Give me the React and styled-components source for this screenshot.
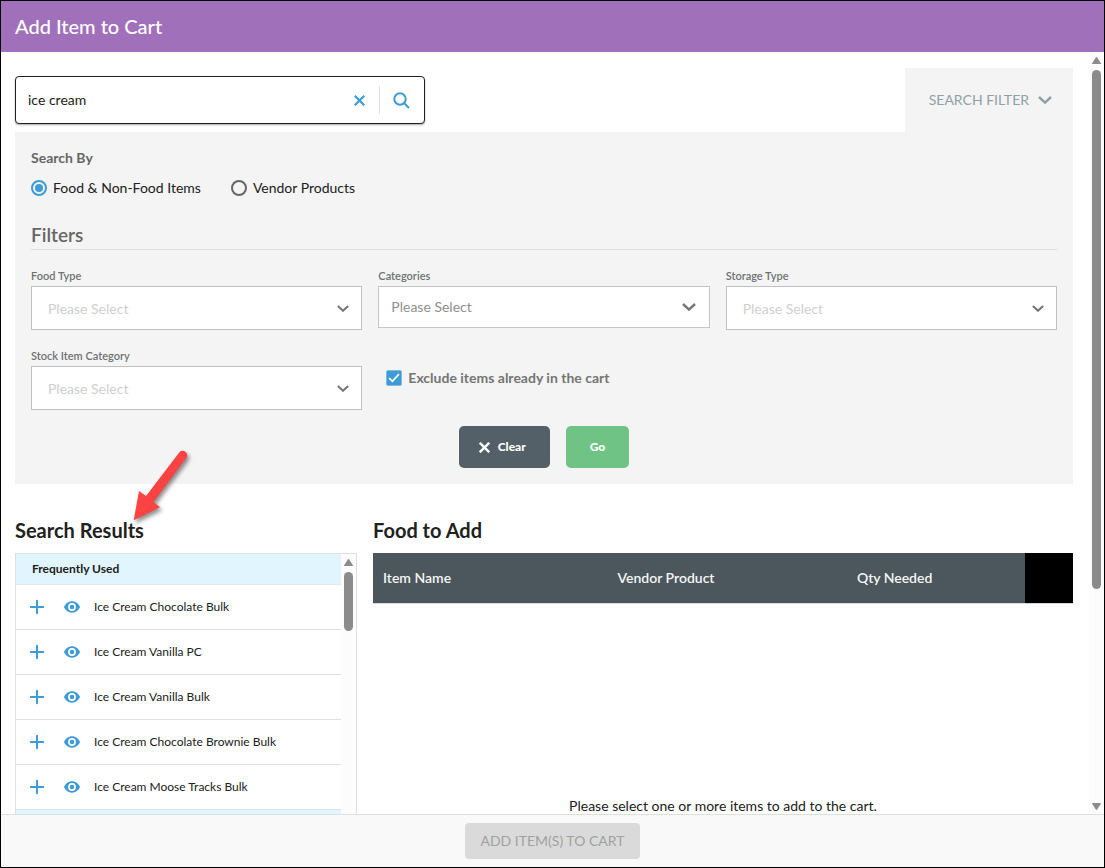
import React, { useState } from "react";
import styled, { createGlobalStyle, css } from "styled-components";

const GlobalStyle = createGlobalStyle`
  *, *::before, *::after { box-sizing: border-box; }
  body {
    margin: 0;
    font-family: Lato, "Liberation Sans", sans-serif;
    font-size: 14px;
    line-height: 20px;
    color: #212121;
    background: #fff;
  }
  button, input, select { font: inherit; color: inherit; }
`;

const blue = "#3d9bd5";
const line = "#dedfdf";

const Dialog = styled.div`
  height: 100vh;
  display: flex;
  flex-direction: column;
  border: 1px solid #000;
  background: #fff;
`;

const DialogHeader = styled.header`
  flex: none;
  padding: 11px 14px 12px;
  background: #a070ba;
  color: #fff;
`;

const Title = styled.h1`
  margin: 0;
  font-size: 20px;
  line-height: 28px;
  font-weight: 500;
`;

const Main = styled.div`
  flex: 1;
  min-height: 0;
  display: flex;
`;

const ScrollArea = styled.main`
  flex: 1;
  min-width: 0;
  overflow-y: auto;
  scrollbar-width: none;
  padding: 16px 16px 16px 14px;
`;

const Rail = styled.div`
  flex: none;
  width: 15px;
  padding: 5px 3px 4px;
  display: flex;
  flex-direction: column;
  gap: 6px;
  background: #fcfcfc;
`;

const Track = styled.div`
  flex: 1;
  display: flex;
  flex-direction: column;
`;

const Thumb = styled.div`
  flex: ${(p) => p.$share};
  border-radius: 5px;
  background: #8b8b8b;
`;

const RailRest = styled.div`
  flex: ${(p) => p.$share};
`;

const TopRow = styled.div`
  display: flex;
  justify-content: space-between;
  align-items: center;
`;

const SearchBox = styled.form`
  width: 410px;
  height: 48px;
  display: flex;
  align-items: center;
  padding-right: 14px;
  border: 1px solid #212121;
  border-radius: 4px;
  box-shadow: 0 1px 2px rgba(0, 0, 0, 0.35);
  background: #fff;
`;

const SearchInput = styled.input`
  flex: 1;
  min-width: 0;
  padding: 0 12px;
  border: 0;
  outline: 0;
  background: transparent;
`;

const IconButton = styled.button`
  display: grid;
  place-items: center;
  padding: 0;
  border: 0;
  background: none;
  color: ${blue};
  cursor: pointer;
`;

const ClearSearch = styled(IconButton)`
  margin-right: 14px;
`;

const SubmitSearch = styled(IconButton)`
  height: 28px;
  padding-left: 13px;
  border-left: 1px solid ${line};
`;

const FilterTab = styled.button`
  height: 64px;
  display: flex;
  align-items: center;
  gap: 9px;
  padding: 0 21px 0 24px;
  border: 0;
  background: #f4f4f4;
  color: #8fa0a8;
`;

const FilterPanel = styled.section`
  padding: 16px;
  background: #f4f4f4;
`;

const RadioGroup = styled.fieldset`
  margin: 0;
  padding: 0;
  border: 0;
  display: flex;
  flex-wrap: wrap;
  gap: 0 30px;
`;

const Legend = styled.legend`
  padding: 0;
  margin-bottom: 10px;
  color: #666;
  font-weight: 700;
`;

const RadioLabel = styled.label`
  display: flex;
  align-items: center;
  gap: 6px;
`;

const Radio = styled.input`
  appearance: none;
  width: 16px;
  height: 16px;
  margin: 0;
  border: 2px solid #666;
  border-radius: 50%;
  display: grid;
  place-items: center;

  &:checked { border-color: ${blue}; }
  &:checked::before {
    content: "";
    width: 8px;
    height: 8px;
    border-radius: 50%;
    background: ${blue};
  }
`;

const FiltersTitle = styled.h2`
  margin: 24px 0 16px;
  padding-bottom: 1px;
  border-bottom: 1px solid ${line};
  color: #666;
  font-size: 19px;
  line-height: 26px;
  font-weight: 600;
`;

const FieldGrid = styled.div`
  display: grid;
  grid-template-columns: repeat(3, minmax(0, 1fr));
  column-gap: 16px;
  row-gap: 16px;
`;

const Field = styled.div`
  display: flex;
  flex-direction: column;
`;

const FieldLabel = styled.label`
  color: #6e7275;
  font-size: 11px;
  line-height: 20px;
  font-weight: 600;
`;

const SelectWrap = styled.div`
  display: grid;
  align-items: center;

  > * { grid-area: 1 / 1; }
  > svg {
    justify-self: end;
    margin-right: ${(p) => (p.$compact ? "14px" : "13px")};
    pointer-events: none;
    color: #757575;
  }
`;

const Select = styled.select`
  appearance: none;
  width: 100%;
  height: 44px;
  padding: 1px 32px 0 16px;
  border: 1px solid #bfc0c0;
  border-radius: 0;
  background: #fff;
  color: #cfcfcf;

  ${(p) =>
    p.$compact &&
    css`
      height: 42px;
      padding: 0 32px 0 12px;
      border-color: #c4c5c5;
      color: #909090;
    `}
`;

const CheckLabel = styled.label`
  align-self: center;
  display: flex;
  align-items: center;
  gap: 6px;
  padding-left: 8px;
  color: #757575;
  font-weight: 700;
`;

const CheckMark = styled.span`
  display: grid;
  place-items: center;
  > * { grid-area: 1 / 1; }
  > svg { pointer-events: none; color: #fff; }
`;

const Checkbox = styled.input`
  appearance: none;
  width: 16px;
  height: 16px;
  margin: 0;
  border: 1px solid #7dbbe2;
  border-radius: 2px;
  background: #fff;
  &:checked { background: ${blue}; }
`;

const Actions = styled.div`
  display: flex;
  justify-content: center;
  gap: 16px;
  margin-top: 16px;
`;

const Button = styled.button`
  height: 42px;
  display: flex;
  align-items: center;
  gap: 8px;
  padding: 0 24px 0 ${(p) => (p.$go ? "24px" : "20px")};
  border: 0;
  border-radius: 5px;
  background: ${(p) => (p.$go ? "#6ec385" : "#546067")};
  color: #fff;
  font-size: 12px;
  font-weight: 900;
`;

const Columns = styled.div`
  display: grid;
  grid-template-columns: 342px minmax(0, 1fr);
  column-gap: 16px;
  margin-top: 32px;
`;

const Column = styled.section`
  position: relative;
  min-width: 0;
`;

const ColumnTitle = styled.h2`
  margin: 0 0 9px;
  font-size: 20px;
  line-height: 28px;
  font-weight: 700;
`;

const Pointer = styled.svg`
  position: absolute;
  top: -70px;
  left: 110px;
  pointer-events: none;
  overflow: visible;

  g { filter: drop-shadow(2px 3px 2px rgba(0, 0, 0, 0.45)); }
`;

const ResultBox = styled.div`
  height: 320px;
  display: flex;
  border: 1px solid ${line};
`;

const ResultList = styled.div`
  flex: 1;
  min-width: 0;
  overflow-y: auto;
  scrollbar-width: none;
`;

const GroupTitle = styled.h3`
  margin: 0;
  min-height: 31px;
  padding: 0 16px;
  border-bottom: 1px solid #e6eaec;
  background: #e0f5ff;
  font-size: 12px;
  line-height: 30px;
  font-weight: 700;
`;

const Rows = styled.ul`
  margin: 0;
  padding: 0;
  list-style: none;
`;

const Row = styled.li`
  height: 45px;
  display: flex;
  align-items: center;
  padding-left: 13px;
  border-bottom: 1px solid ${line};
  font-size: 12px;
`;

const RowButton = styled(IconButton)`
  margin-right: ${(p) => p.$gap};
`;

const Table = styled.table`
  width: 100%;
  border-collapse: separate;
  border-spacing: 0;
  table-layout: fixed;
`;

const HeadCell = styled.th`
  width: ${(p) => p.$width};
  height: 51px;
  padding: 0 10px;
  border-bottom: 1px solid #d5dadd;
  background: ${(p) => (p.$blank ? "#000" : "#4c575d")};
  background-clip: padding-box;
  color: #f5f5f5;
  text-align: left;
  font-weight: 600;
`;

const EmptyCell = styled.td`
  padding: 192px 0 40px;
  text-align: center;
`;

const Footer = styled.footer`
  flex: none;
  display: flex;
  justify-content: center;
  padding: 8px;
  border-top: 1px solid ${line};
  background: #f9f9f9;
`;

const AddButton = styled.button`
  height: 36px;
  padding: 0 15px;
  border: 0;
  border-radius: 4px;
  background: #dadada;
  color: #a1a1a1;
`;

const Chevron = ({ size = 14 }) => (
  <svg width={size} height={size === 14 ? 8 : 7} viewBox="0 0 14 8" fill="none" stroke="currentColor" strokeWidth="2.4" aria-hidden="true">
    <path d="M1 1l6 5.600L13 1" />
  </svg>
);

const Cross = ({ size = 11, weight = 2 }) => (
  <svg width={size} height={size} viewBox="0 0 10 10" fill="none" stroke="currentColor" strokeWidth={weight} aria-hidden="true">
    <path d="M.7.7l8.600 8.600M9.300.7L.7 9.300" />
  </svg>
);

const Magnifier = () => (
  <svg width="17" height="17" viewBox="0 0 17 17" fill="none" stroke="currentColor" strokeWidth="2" aria-hidden="true">
    <circle cx="7" cy="7" r="5.700" />
    <path d="M11 11l5 5" />
  </svg>
);

const Plus = () => (
  <svg width="16" height="16" viewBox="0 0 16 16" fill="none" stroke="currentColor" strokeWidth="2" strokeLinecap="round" aria-hidden="true">
    <path d="M8 1.800v12.400M1.800 8h12.400" />
  </svg>
);

const Eye = () => (
  <svg width="16" height="12" viewBox="0 0 16 12" aria-hidden="true">
    <path
      fill="currentColor"
      fillRule="evenodd"
      d="M8 .3C4.400.3 1.300 2.600 0 6c1.300 3.400 4.400 5.700 8 5.700s6.700-2.300 8-5.700C14.700 2.600 11.600.3 8 .3zM8 9.900a3.900 3.900 0 1 1 0-7.800 3.900 3.900 0 0 1 0 7.800zM8 3.700a2.300 2.300 0 1 0 0 4.600 2.300 2.300 0 0 0 0-4.600z"
    />
  </svg>
);

const Arrow = ({ down }) => (
  <svg width="9" height="7" viewBox="0 0 9 7" fill="#8b8b8b" aria-hidden="true">
    <path d={down ? "M0 .5Q0 0 .5 0h8Q9 0 9 .5L5.200 6.500q-.7.800-1.400 0z" : "M0 6.500Q0 7 .5 7h8Q9 7 9 6.500L5.200.5q-.7-.8-1.400 0z"} />
  </svg>
);

const Scrollbar = ({ thumb, rest }) => (
  <Rail aria-hidden="true">
    <Arrow />
    <Track>
      <Thumb $share={thumb} />
      <RailRest $share={rest} />
    </Track>
    <Arrow down />
  </Rail>
);

const SelectField = ({ id, label, compact }) => (
  <Field>
    <FieldLabel htmlFor={id}>{label}</FieldLabel>
    <SelectWrap $compact={compact}>
      <Select id={id} $compact={compact}>
        <option>Please Select</option>
      </Select>
      <Chevron size={compact ? 14 : 12} />
    </SelectWrap>
  </Field>
);

const items = [
  "Ice Cream Chocolate Bulk",
  "Ice Cream Vanilla PC",
  "Ice Cream Vanilla Bulk",
  "Ice Cream Chocolate Brownie Bulk",
  "Ice Cream Moose Tracks Bulk",
];

export default function App() {
  const [query, setQuery] = useState("ice cream");
  const [searchBy, setSearchBy] = useState("food");
  const [exclude, setExclude] = useState(true);

  return (
    <>
      <GlobalStyle />
      <Dialog role="dialog" aria-labelledby="dialog-title">
        <DialogHeader>
          <Title id="dialog-title">Add Item to Cart</Title>
        </DialogHeader>

        <Main>
          <ScrollArea>
            <TopRow>
              <SearchBox role="search" onSubmit={(e) => e.preventDefault()}>
                <SearchInput aria-label="Search items" value={query} onChange={(e) => setQuery(e.target.value)} />
                <ClearSearch type="button" aria-label="Clear search" onClick={() => setQuery("")}>
                  <Cross />
                </ClearSearch>
                <SubmitSearch type="submit" aria-label="Search">
                  <Magnifier />
                </SubmitSearch>
              </SearchBox>
              <FilterTab type="button">
                SEARCH FILTER
                <Chevron />
              </FilterTab>
            </TopRow>

            <FilterPanel>
              <RadioGroup>
                <Legend>Search By</Legend>
                <RadioLabel>
                  <Radio type="radio" name="by" checked={searchBy === "food"} onChange={() => setSearchBy("food")} />
                  Food &amp; Non-Food Items
                </RadioLabel>
                <RadioLabel>
                  <Radio type="radio" name="by" checked={searchBy === "vendor"} onChange={() => setSearchBy("vendor")} />
                  Vendor Products
                </RadioLabel>
              </RadioGroup>

              <FiltersTitle>Filters</FiltersTitle>
              <FieldGrid>
                <SelectField id="food-type" label="Food Type" />
                <SelectField id="categories" label="Categories" compact />
                <SelectField id="storage-type" label="Storage Type" />
                <SelectField id="stock-category" label="Stock Item Category" />
                <CheckLabel>
                  <CheckMark>
                    <Checkbox type="checkbox" checked={exclude} onChange={() => setExclude(!exclude)} />
                    <svg width="12" height="10" viewBox="0 0 11 9" fill="none" stroke="currentColor" strokeWidth="1.600" aria-hidden="true">
                      <path d="M1 4.500l3 3L10 1" />
                    </svg>
                  </CheckMark>
                  Exclude items already in the cart
                </CheckLabel>
              </FieldGrid>

              <Actions>
                <Button type="button">
                  <Cross weight={2.2} />
                  Clear
                </Button>
                <Button type="button" $go>
                  Go
                </Button>
              </Actions>
            </FilterPanel>

            <Columns>
              <Column>
                <ColumnTitle>Search Results</ColumnTitle>
                <Pointer width="72" height="84" viewBox="125 446 72 84" aria-hidden="true">
                  <g fill="#fb4343">
                    <path d="M133.700 520.300L139 491l7 5 33.200-43.500a4.400 4.400 0 0 1 7 5.500L153.500 502l6.500 5.300z" />
                  </g>
                </Pointer>
                <ResultBox>
                  <ResultList>
                    <GroupTitle>Frequently Used</GroupTitle>
                    <Rows>
                      {items.map((name) => (
                        <Row key={name}>
                          <RowButton type="button" aria-label={`Add ${name}`} $gap="19px">
                            <Plus />
                          </RowButton>
                          <RowButton type="button" aria-label={`View ${name}`} $gap="14px">
                            <Eye />
                          </RowButton>
                          {name}
                        </Row>
                      ))}
                    </Rows>
                    <GroupTitle as="div" />
                  </ResultList>
                  <Scrollbar thumb={58} rest={222} />
                </ResultBox>
              </Column>

              <Column>
                <ColumnTitle>Food to Add</ColumnTitle>
                <Table>
                  <thead>
                    <tr>
                      <HeadCell $width="33.5%">Item Name</HeadCell>
                      <HeadCell $width="34.2%">Vendor Product</HeadCell>
                      <HeadCell>Qty Needed</HeadCell>
                      <HeadCell $width="48px" $blank aria-label="Actions" />
                    </tr>
                  </thead>
                  <tbody>
                    <tr>
                      <EmptyCell colSpan={4}>Please select one or more items to add to the cart.</EmptyCell>
                    </tr>
                  </tbody>
                </Table>
              </Column>
            </Columns>
          </ScrollArea>
          <Scrollbar thumb={5} rest={2} />
        </Main>

        <Footer>
          <AddButton type="button" disabled>
            ADD ITEM(S) TO CART
          </AddButton>
        </Footer>
      </Dialog>
    </>
  );
}
